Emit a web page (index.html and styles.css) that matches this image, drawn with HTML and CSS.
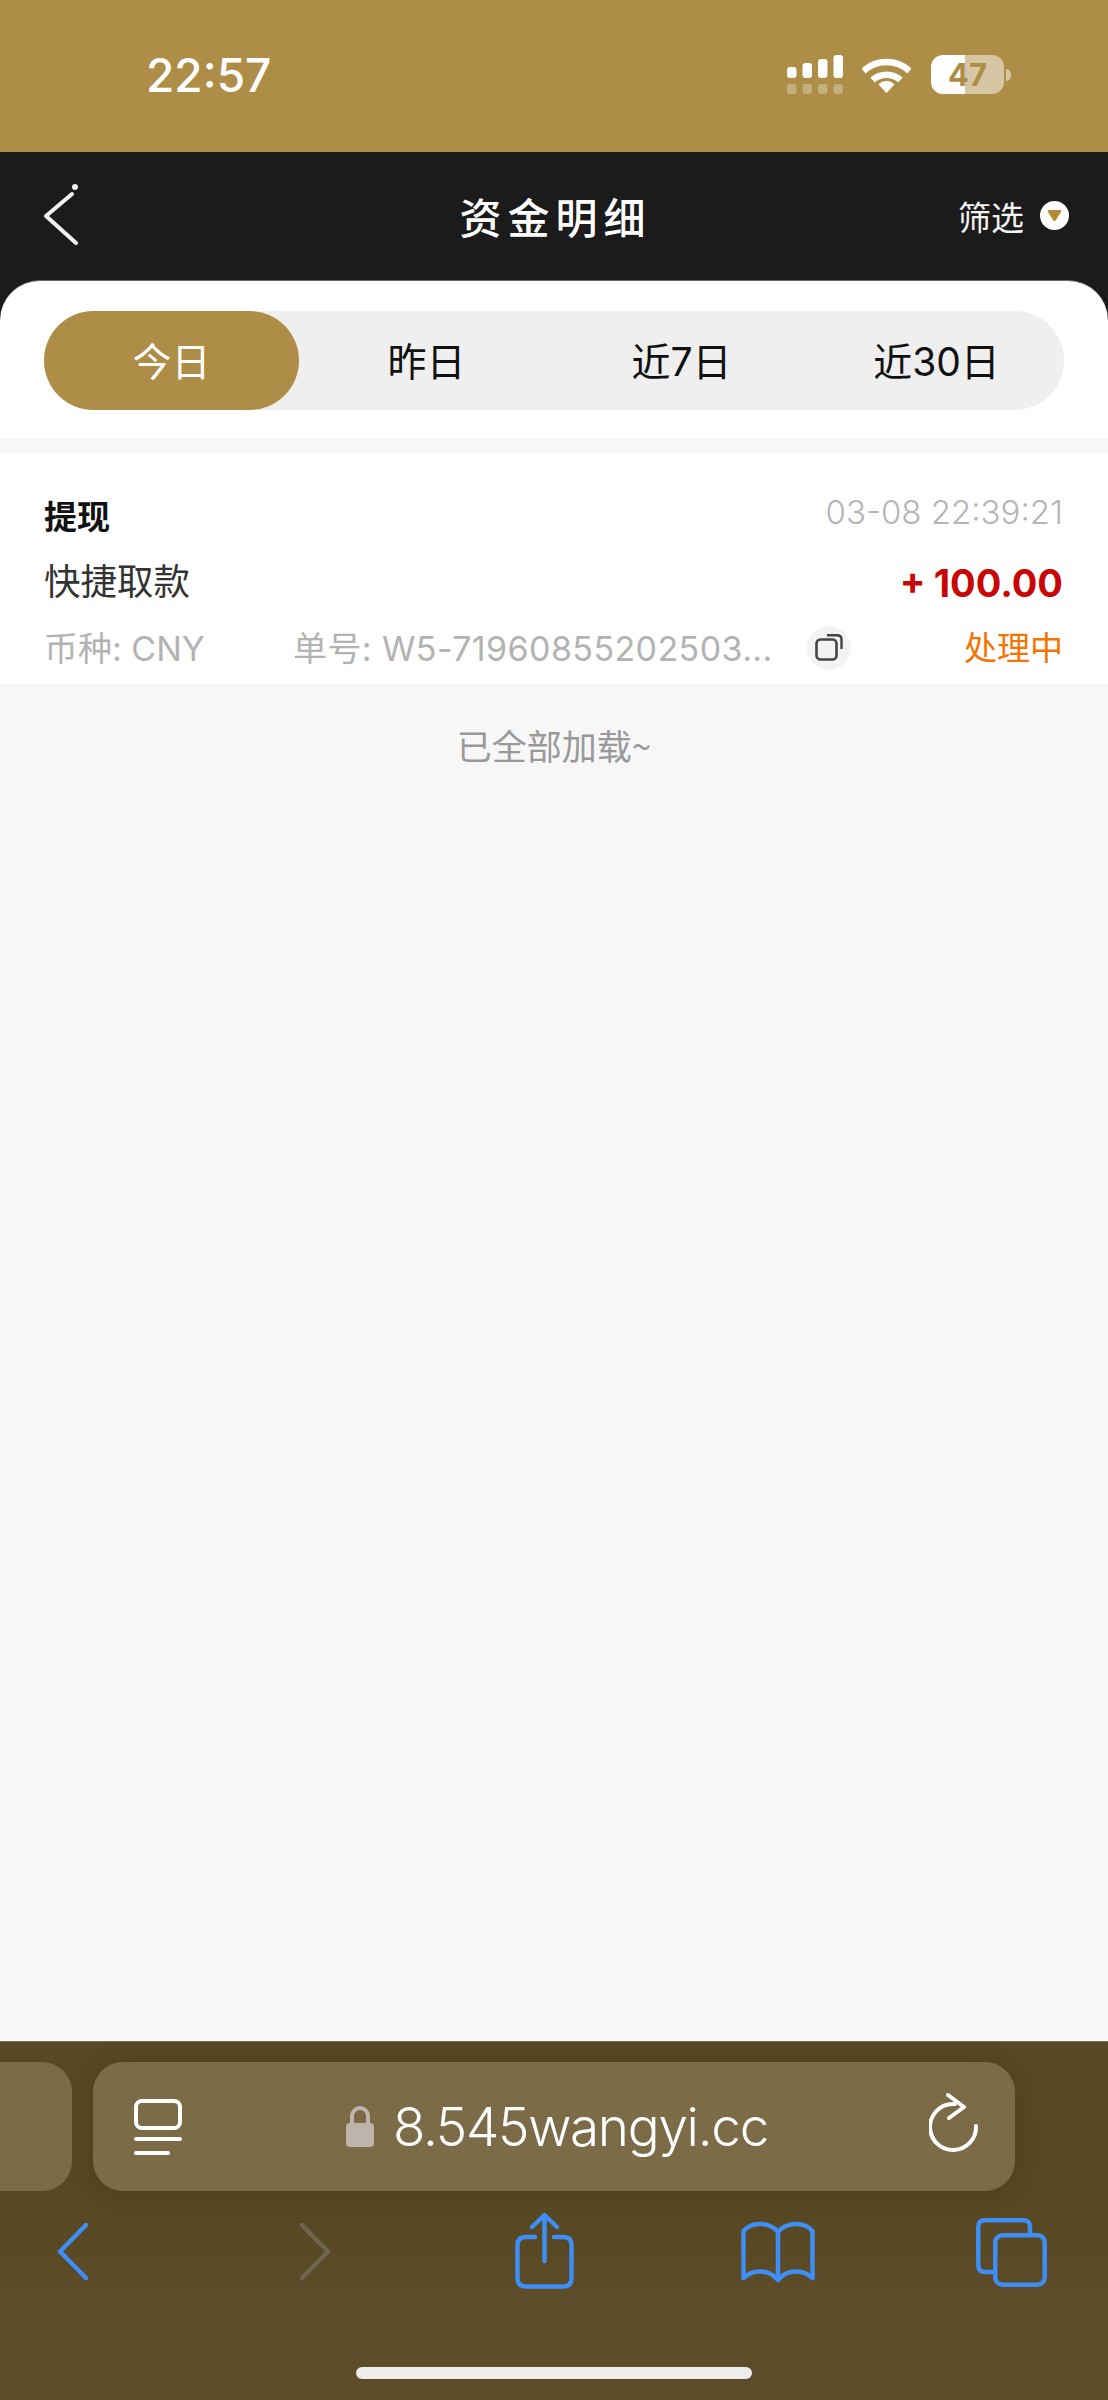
FILE: index.html
```html
<!DOCTYPE html>
<html lang="zh-CN">
<head>
  <meta charset="UTF-8" />
  <meta name="viewport" content="width=device-width, initial-scale=1.0" />
  <title>资金明细</title>
  <link rel="stylesheet" href="styles.css">
</head>
<body>
  <div class="status-bar">
    <span class="time">22:57</span>
    <div class="status-icons">
      <svg class="signal" width="56" height="39" viewBox="0 0 56 39">
        <g fill="#fff">
          <rect x="0" y="12" width="9.5" height="11" rx="3"/>
          <rect x="15.5" y="8" width="9.5" height="15" rx="3"/>
          <rect x="31" y="4" width="9.5" height="19" rx="3"/>
          <rect x="46.5" y="0" width="9.5" height="23" rx="3"/>
        </g>
        <g fill="#fff" opacity="0.3">
          <rect x="0" y="29" width="9.5" height="10" rx="3"/>
          <rect x="15.5" y="29" width="9.5" height="10" rx="3"/>
          <rect x="31" y="29" width="9.5" height="10" rx="3"/>
          <rect x="46.5" y="29" width="9.5" height="10" rx="3"/>
        </g>
      </svg>
      <svg class="wifi" width="49" height="36" viewBox="0 0 49 36">
        <path d="M1.5 14 A34 34 0 0 1 47.5 14" fill="none" stroke="#fff" stroke-width="6.5"/>
        <path d="M10.5 23 A21 21 0 0 1 38.5 23" fill="none" stroke="#fff" stroke-width="6.5"/>
        <path d="M24.5 36 L16.5 27.5 A11 11 0 0 1 32.5 27.5 Z" fill="#fff"/>
      </svg>
      <div class="battery"><span>47</span></div>
      <div class="battery-nub"></div>
    </div>
  </div>

  <header class="nav">
    <svg class="back" width="40" height="62" viewBox="0 0 40 62">
      <path d="M30 11 L4 33 L34 60" fill="none" stroke="#f2f2f2" stroke-width="4" stroke-linecap="round" stroke-linejoin="round"/>
      <circle cx="33" cy="4" r="3" fill="#f2f2f2"/>
    </svg>
    <h1>资金明细</h1>
    <div class="filter">
      <span>筛选</span>
      <svg width="29" height="29" viewBox="0 0 29 29">
        <circle cx="14.5" cy="14.5" r="14.5" fill="#fff"/>
        <path d="M9 9 H20 Q22 9 21 11 L16 19 Q14.5 21 13 19 L8 11 Q7 9 9 9 Z" fill="#b58b33"/>
      </svg>
    </div>
  </header>

  <div class="sheet-wrap">
    <div class="sheet">
      <div class="tabs">
        <div class="tab active">今日</div>
        <div class="tab">昨日</div>
        <div class="tab">近7日</div>
        <div class="tab">近30日</div>
      </div>
    </div>
  </div>

  <main class="content">
    <section class="record">
      <div class="line">
        <span class="type">提现</span>
        <span class="date">03-08 22:39:21</span>
      </div>
      <div class="line">
        <span class="method">快捷取款</span>
        <span class="amount">+ 100.00</span>
      </div>
      <div class="line">
        <span class="currency">币种: CNY</span>
        <span class="order">单号: W5-71960855202503...</span>
        <span class="copy">
          <svg width="28" height="27" viewBox="0 0 28 27">
            <rect x="1.5" y="5.5" width="20" height="20" rx="4" fill="none" stroke="#444" stroke-width="2.6"/>
            <path d="M12 1.3 H22 Q26.5 1.3 26.5 5.5 V15" fill="none" stroke="#444" stroke-width="2.4"/>
          </svg>
        </span>
        <span class="state">处理中</span>
      </div>
    </section>
    <p class="end">已全部加载~</p>
  </main>

  <footer class="browser">
    <div class="url-row">
      <div class="prev-tab"></div>
      <div class="url-bar">
        <svg class="reader" width="48" height="58" viewBox="0 0 48 58">
          <rect x="2" y="2" width="44" height="27" rx="6" fill="none" stroke="#fff" stroke-width="4"/>
          <path d="M2 40 H46 M2 54 H34" fill="none" stroke="#fff" stroke-width="4" stroke-linecap="round"/>
        </svg>
        <div class="address">
          <svg width="28" height="41" viewBox="0 0 28 41">
            <path d="M6 18 V10 A8 8 0 0 1 22 10 V18" fill="none" stroke="#bdb5ab" stroke-width="4"/>
            <rect x="0" y="17" width="28" height="24" rx="4" fill="#bdb5ab"/>
          </svg>
          <span>8.545wangyi.cc</span>
        </div>
        <svg class="reload" width="50" height="60" viewBox="0 0 50 60">
          <path d="M47 33 A23 23 0 1 1 24 11 H26" fill="none" stroke="#fff" stroke-width="4" stroke-linecap="round"/>
          <path d="M19 2 L35 14 L20 25" fill="none" stroke="#fff" stroke-width="4" stroke-linecap="round" stroke-linejoin="round"/>
        </svg>
      </div>
    </div>
    <div class="tools">
      <svg class="tool-back" width="31" height="57" viewBox="0 0 31 57">
        <path d="M29 2 L3 28.5 L29 55" fill="none" stroke="#3f8ef5" stroke-width="4.5" stroke-linecap="round" stroke-linejoin="round"/>
      </svg>
      <svg class="tool-forward" width="31" height="57" viewBox="0 0 31 57">
        <path d="M2 2 L28 28.5 L2 55" fill="none" stroke="#6f6650" stroke-width="4.5" stroke-linecap="round" stroke-linejoin="round"/>
      </svg>
      <svg class="tool-share" width="59" height="76" viewBox="0 0 59 76">
        <path d="M20 24 H11 Q2.5 24 2.5 32 V65 Q2.5 73.5 11 73.5 H48 Q56.5 73.5 56.5 65 V32 Q56.5 24 48 24 H39" fill="none" stroke="#3f8ef5" stroke-width="4.5" stroke-linecap="round"/>
        <path d="M29.5 3 V48 M17 14 L29.5 2 L42 14" fill="none" stroke="#3f8ef5" stroke-width="4.5" stroke-linecap="round" stroke-linejoin="round"/>
      </svg>
      <svg class="tool-book" width="74" height="62" viewBox="0 0 74 62">
        <path d="M37 11 C30 2 12 -1 2.5 10 V57 C12 48 28 48 37 59 C46 48 62 48 71.5 57 V10 C62 -1 44 2 37 11 Z M37 11 V59" fill="none" stroke="#3f8ef5" stroke-width="4.5" stroke-linejoin="round"/>
      </svg>
      <svg class="tool-tabs" width="71" height="69" viewBox="0 0 71 69">
        <path d="M54 16 V9 Q54 2.3 47 2.3 H9 Q2.3 2.3 2.3 9 V47 Q2.3 54 9 54 H17" fill="none" stroke="#3f8ef5" stroke-width="4.5"/>
        <rect x="19.3" y="17.3" width="49.4" height="49.4" rx="7" fill="none" stroke="#3f8ef5" stroke-width="4.5"/>
      </svg>
    </div>
    <div class="home-bar"></div>
  </footer>
</body>
</html>
```

FILE: styles.css
```css
* { box-sizing: border-box; }
body { margin: 0; width: 1108px; height: 2400px; display: flex; flex-direction: column; background: #f7f7f7; font-family: "Noto Sans CJK SC", Inter, sans-serif; overflow: hidden; }
svg { display: block; flex: none; }

.status-bar { height: 152px; background: #ae8d47; display: flex; align-items: center; justify-content: space-between; padding: 0 97px 3px 146px; flex: none; }
.time { font-family: Inter, sans-serif; font-size: 46px; font-weight: 500; color: #fff; }
.status-icons { display: flex; align-items: center; }
.wifi { margin-left: 19px; }
.battery { width: 73px; height: 39px; margin-left: 20px; border-radius: 12px; background: linear-gradient(to right, #fff 47%, rgba(255,255,255,0.5) 47%); display: flex; align-items: center; justify-content: center; }
.battery span { font-family: Inter, sans-serif; font-size: 31px; font-weight: 700; color: #ae8d47; line-height: 1; }
.battery-nub { width: 5px; height: 12px; margin-left: 2px; border-radius: 0 5px 5px 0; background: rgba(255,255,255,0.5); }

.nav { height: 128px; background: #1b1b1b; display: grid; grid-template-columns: 1fr auto 1fr; align-items: center; padding: 0 39px 0 42px; flex: none; }
.nav h1 { margin: 0; font-size: 42px; font-weight: 500; color: #fff; letter-spacing: 6px; line-height: 1; }
.back { margin-top: -4px; }
.filter { justify-self: end; display: flex; align-items: center; gap: 16px; font-size: 33px; color: #f2f2f2; margin-top: -1px; }

.sheet-wrap { background: #1b1b1b; flex: none; }
.sheet { background: #fff; border-top: 1px solid #666; border-radius: 40px 40px 0 0; padding: 30px 44px 29px; }
.tabs { height: 99px; display: grid; grid-template-columns: repeat(4, 1fr); background: #efefef; border-radius: 50px; }
.tab { display: flex; align-items: center; justify-content: center; font-family: Inter, "Noto Sans CJK SC", sans-serif; font-size: 39px; color: #111; border-radius: 50px; padding-bottom: 3px; }
.tab.active { background: #ae8d47; color: #fff; }

.content { flex: 1; padding-top: 14px; }
.record { background: #fff; padding: 32px 45px 4px 44px; }
.line { height: 65px; display: flex; align-items: center; justify-content: space-between; }
.type { font-size: 33px; font-weight: 700; color: #111; margin-top: -6px; }
.date { font-family: Inter, sans-serif; font-size: 33px; font-weight: 300; color: #b5b5b5; margin-top: -12px; }
.method { font-size: 36.5px; color: #333; margin-top: -6px; }
.amount { font-family: Inter, sans-serif; font-size: 38px; font-weight: 700; color: #c80606; word-spacing: -1px; }
.currency, .order { font-family: Inter, "Noto Sans CJK SC", sans-serif; font-size: 34px; color: #b3b3b3; white-space: nowrap; margin-top: -3px; }
.currency { width: 249px; flex: none; }
.order { flex: none; width: 514px; letter-spacing: 0.4px; }
.copy { width: 44px; height: 44px; border-radius: 50%; background: #f3f3f3; display: flex; align-items: center; justify-content: center; flex: none; }
.state { font-size: 33px; color: #f57300; margin-left: auto; margin-top: -3px; }
.end { margin: 0; padding-top: 36px; font-size: 35px; line-height: 50px; color: #999; text-align: center; }

.browser { height: 359px; flex: none; background: linear-gradient(to bottom, #584825, #574722 50%, #5c4c29 70%); border-top: 1px solid #77705e; display: flex; flex-direction: column; }
.url-row { display: flex; gap: 21px; margin: 20px 0 0 0; height: 129px; }
.prev-tab { width: 72px; background: #7b6b47; border-radius: 0 30px 30px 0; flex: none; }
.url-bar { width: 922px; background: #7b6b47; border-radius: 30px; display: flex; align-items: center; padding: 0 36px 0 41px; box-shadow: 0 0 24px rgba(0,0,0,0.12); }
.reader { margin-top: 2px; }
.address { flex: 1; display: flex; align-items: center; justify-content: center; gap: 19px; color: #fff; font-family: Inter, sans-serif; font-size: 53px; font-weight: 300; letter-spacing: -1.3px; padding-left: 3px; }
.reload { margin-top: -8px; }
.tools { display: flex; align-items: flex-start; margin-top: 22px; height: 148px; padding-left: 57px; }
.tool-back { margin-top: 10px; }
.tool-forward { margin: 10px 0 0 212px; }
.tool-share { margin-left: 184px; }
.tool-book { margin: 8px 0 0 167px; }
.tool-tabs { margin: 5px 0 0 161px; }
.home-bar { width: 396px; height: 12px; margin-left: 356px; margin-top: 6px; border-radius: 6px; background: #ededed; }
```
